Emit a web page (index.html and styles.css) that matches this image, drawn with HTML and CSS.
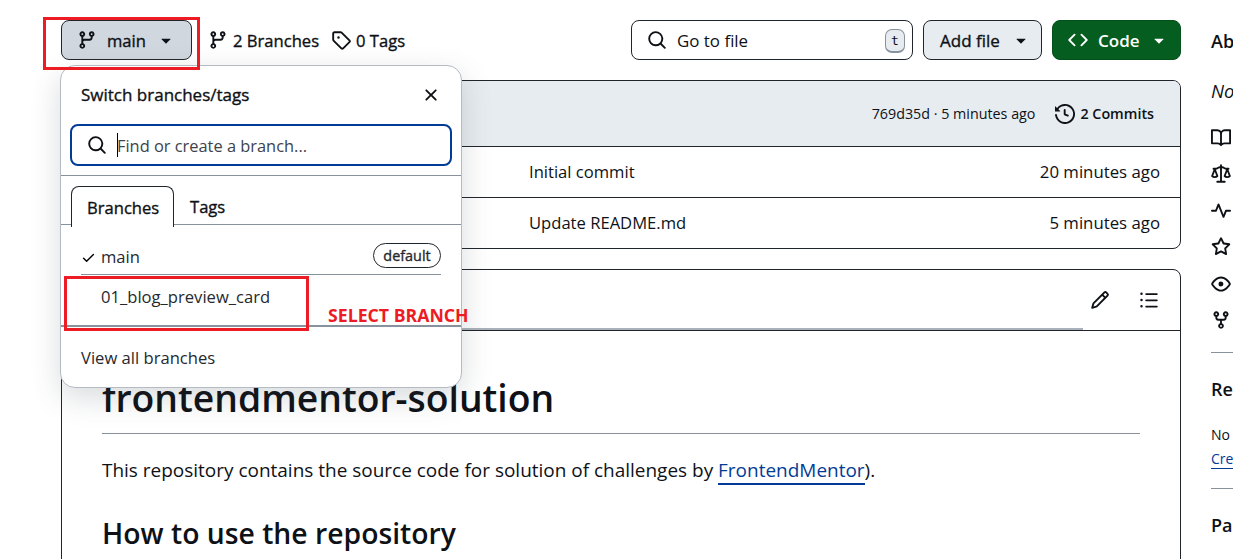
FILE: index.html
```html
<!DOCTYPE html>
<html lang="en">
<head>
<meta charset="utf-8">
<title>frontendmentor-solution</title>
<link rel="stylesheet" href="styles.css">
</head>
<body>
<svg class="sprite" width="0" height="0" aria-hidden="true">
  <symbol id="branch" viewBox="0 0 16 16"><path d="M9.5 3.25a2.25 2.25 0 1 1 3 2.122V6A2.5 2.5 0 0 1 10 8.5H6a1 1 0 0 0-1 1v1.128a2.251 2.251 0 1 1-1.5 0V5.372a2.25 2.25 0 1 1 1.5 0v1.836A2.493 2.493 0 0 1 6 7h4a1 1 0 0 0 1-1v-.628A2.25 2.25 0 0 1 9.5 3.25Zm-6 0a.75.75 0 1 0 1.5 0 .75.75 0 0 0-1.5 0Zm8.25-.75a.75.75 0 1 0 0 1.5.75.75 0 0 0 0-1.5ZM4.25 12a.75.75 0 1 0 0 1.5.75.75 0 0 0 0-1.5Z"/></symbol>
  <symbol id="tag" viewBox="0 0 16 16"><path d="M1 7.775V2.75C1 1.784 1.784 1 2.75 1h5.025c.464 0 .91.184 1.238.513l6.25 6.25a1.75 1.75 0 0 1 0 2.474l-5.026 5.026a1.75 1.75 0 0 1-2.474 0l-6.25-6.25A1.752 1.752 0 0 1 1 7.775Zm1.5 0c0 .066.026.13.073.177l6.25 6.25a.25.25 0 0 0 .354 0l5.025-5.025a.25.25 0 0 0 0-.354l-6.25-6.25a.25.25 0 0 0-.177-.073H2.75a.25.25 0 0 0-.25.25ZM6 5a1 1 0 1 1 0 2 1 1 0 0 1 0-2Z"/></symbol>
  <symbol id="search" viewBox="0 0 16 16"><path d="M10.68 11.74a6 6 0 0 1-7.922-8.982 6 6 0 0 1 8.982 7.922l3.04 3.04a.749.749 0 0 1-.326 1.275.749.749 0 0 1-.734-.215ZM11.5 7a4.499 4.499 0 1 0-8.997 0A4.499 4.499 0 0 0 11.5 7Z"/></symbol>
  <symbol id="code" viewBox="0 0 16 16"><path d="m11.28 3.22 4.25 4.25a.75.75 0 0 1 0 1.06l-4.25 4.25a.749.749 0 0 1-1.275-.326.749.749 0 0 1 .215-.734L13.94 8l-3.72-3.72a.749.749 0 0 1 .326-1.275.749.749 0 0 1 .734.215Zm-6.56 0a.751.751 0 0 1 1.042.018.751.751 0 0 1 .018 1.042L2.06 8l3.72 3.72a.749.749 0 0 1-.326 1.275.749.749 0 0 1-.734-.215L.47 8.53a.75.75 0 0 1 0-1.06Z"/></symbol>
  <symbol id="caret" viewBox="0 0 16 16"><path d="m4.427 7.427 3.396 3.396a.25.25 0 0 0 .354 0l3.396-3.396A.25.25 0 0 0 11.396 7H4.604a.25.25 0 0 0-.177.427Z"/></symbol>
  <symbol id="history" viewBox="0 0 16 16"><path d="m.427 1.927 1.215 1.215a8.002 8.002 0 1 1-1.6 5.685.75.75 0 1 1 1.493-.154 6.5 6.5 0 1 0 1.18-4.458l1.358 1.358A.25.25 0 0 1 3.896 6H.25A.25.25 0 0 1 0 5.75V2.104a.25.25 0 0 1 .427-.177ZM7.75 4a.75.75 0 0 1 .75.75v2.992l2.028.812a.75.75 0 0 1-.557 1.392l-2.5-1A.751.751 0 0 1 7 8.25v-3.5A.75.75 0 0 1 7.75 4Z"/></symbol>
  <symbol id="close" viewBox="0 0 16 16"><path d="M3.72 3.72a.75.75 0 0 1 1.06 0L8 6.94l3.22-3.22a.749.749 0 0 1 1.275.326.749.749 0 0 1-.215.734L9.06 8l3.22 3.22a.749.749 0 0 1-.326 1.275.749.749 0 0 1-.734-.215L8 9.06l-3.22 3.22a.751.751 0 0 1-1.042-.018.751.751 0 0 1-.018-1.042L6.94 8 3.72 4.78a.75.75 0 0 1 0-1.06Z"/></symbol>
  <symbol id="check" viewBox="0 0 16 16"><path d="M13.78 4.22a.75.75 0 0 1 0 1.06l-7.25 7.25a.75.75 0 0 1-1.06 0L2.22 9.28a.751.751 0 0 1 .018-1.042.751.751 0 0 1 1.042-.018L6 10.94l6.72-6.72a.75.75 0 0 1 1.06 0Z"/></symbol>
  <symbol id="pencil" viewBox="0 0 16 16"><path d="M11.013 1.427a1.75 1.75 0 0 1 2.474 0l1.086 1.086a1.75 1.75 0 0 1 0 2.474l-8.61 8.61c-.21.21-.47.364-.756.445l-3.251.93a.75.75 0 0 1-.927-.928l.929-3.25c.081-.286.235-.547.445-.758l8.61-8.61Zm.176 4.823L9.75 4.81l-6.286 6.287a.253.253 0 0 0-.064.108l-.558 1.953 1.953-.558a.253.253 0 0 0 .108-.064Zm1.238-3.763a.25.25 0 0 0-.354 0L10.811 3.75l1.439 1.44 1.263-1.263a.25.25 0 0 0 0-.354Z"/></symbol>
  <symbol id="list" viewBox="0 0 16 16"><path d="M5.75 2.5h8.5a.75.75 0 0 1 0 1.5h-8.5a.75.75 0 0 1 0-1.5Zm0 5h8.5a.75.75 0 0 1 0 1.5h-8.5a.75.75 0 0 1 0-1.5Zm0 5h8.5a.75.75 0 0 1 0 1.5h-8.5a.75.75 0 0 1 0-1.5ZM2 14a1 1 0 1 1 0-2 1 1 0 0 1 0 2Zm1-6a1 1 0 1 1-2 0 1 1 0 0 1 2 0ZM2 4a1 1 0 1 1 0-2 1 1 0 0 1 0 2Z"/></symbol>
  <symbol id="book" viewBox="0 0 16 16"><path d="M0 1.75A.75.75 0 0 1 .75 1h4.253c1.227 0 2.317.59 3 1.501A3.743 3.743 0 0 1 11.006 1h4.245a.75.75 0 0 1 .75.75v10.5a.75.75 0 0 1-.75.75h-4.507a2.25 2.25 0 0 0-1.591.659l-.622.621a.75.75 0 0 1-1.06 0l-.622-.621A2.25 2.25 0 0 0 5.258 13H.75a.75.75 0 0 1-.75-.75Zm7.251 10.324.004-5.073-.002-2.253A2.25 2.25 0 0 0 5.003 2.5H1.5v9h3.757a3.75 3.75 0 0 1 1.994.574ZM8.755 4.75l-.004 7.322a3.752 3.752 0 0 1 1.992-.572H14.5v-9h-3.495a2.25 2.25 0 0 0-2.25 2.25Z"/></symbol>
  <symbol id="law" viewBox="0 0 16 16"><path fill="none" stroke="currentColor" stroke-width="1.5" stroke-linecap="round" stroke-linejoin="round" d="M8 .9v13.3M5 14.2h6M2 3.8h1.7c.5 0 1-.1 1.4-.4l.7-.4c.4-.2.8-.4 1.200-.4h2c.4 0 .8.1 1.200.4l.7.4c.4.3.9.4 1.400.4H14M3 4.200.9 9.600c1.200 1.200 3.100 1.200 4.200 0ZM13 4.200l-2.100 5.400c1.100 1.200 3 1.200 4.200 0Z"/></symbol>
  <symbol id="pulse" viewBox="0 0 16 16"><path d="M6 2c.306 0 .582.187.696.471L10 10.731l1.304-3.26A.751.751 0 0 1 12 7h3.25a.75.75 0 0 1 0 1.5h-2.742l-1.812 4.528a.751.751 0 0 1-1.392 0L6 4.77 4.696 8.03A.75.75 0 0 1 4 8.5H.75a.75.75 0 0 1 0-1.5h2.742l1.812-4.529A.751.751 0 0 1 6 2Z"/></symbol>
  <symbol id="star" viewBox="0 0 16 16"><path d="M8 .25a.75.75 0 0 1 .673.418l1.882 3.815 4.21.612a.75.75 0 0 1 .416 1.279l-3.046 2.97.719 4.192a.751.751 0 0 1-1.088.791L8 12.347l-3.766 1.98a.75.75 0 0 1-1.088-.79l.72-4.194L.818 6.374a.75.75 0 0 1 .416-1.28l4.21-.611L7.327.668A.75.75 0 0 1 8 .25Zm0 2.445L6.615 5.5a.75.75 0 0 1-.564.41l-3.097.45 2.24 2.184a.75.75 0 0 1 .216.664l-.528 3.084 2.769-1.456a.75.75 0 0 1 .698 0l2.77 1.456-.53-3.084a.75.75 0 0 1 .216-.664l2.24-2.183-3.096-.45a.75.75 0 0 1-.564-.41L8 2.694Z"/></symbol>
  <symbol id="eye" viewBox="0 0 16 16"><path d="M8 2c1.981 0 3.671.992 4.933 2.078 1.27 1.091 2.187 2.345 2.637 3.023a1.62 1.62 0 0 1 0 1.798c-.45.678-1.367 1.932-2.637 3.023C11.67 13.008 9.981 14 8 14c-1.981 0-3.671-.992-4.933-2.078C1.797 10.83.88 9.576.43 8.898a1.62 1.62 0 0 1 0-1.798c.45-.677 1.367-1.931 2.637-3.022C4.33 2.992 6.019 2 8 2ZM1.679 7.932a.12.12 0 0 0 0 .136c.411.622 1.241 1.75 2.366 2.717C5.176 11.758 6.527 12.5 8 12.5c1.473 0 2.825-.742 3.955-1.715 1.124-.967 1.954-2.096 2.366-2.717a.12.12 0 0 0 0-.136c-.412-.621-1.242-1.75-2.366-2.717C10.824 4.242 9.473 3.5 8 3.5c-1.473 0-2.825.742-3.955 1.715-1.124.967-1.954 2.096-2.366 2.717ZM8 10a2 2 0 1 1-.001-3.999A2 2 0 0 1 8 10Z"/></symbol>
  <symbol id="fork" viewBox="0 0 16 16"><path d="M5 5.372v.878c0 .414.336.75.75.75h4.5a.75.75 0 0 0 .75-.75v-.878a2.25 2.25 0 1 1 1.5 0v.878a2.25 2.25 0 0 1-2.25 2.25h-1.5v2.128a2.251 2.251 0 1 1-1.5 0V8.5h-1.5A2.25 2.25 0 0 1 3.5 6.25v-.878a2.25 2.25 0 1 1 1.5 0ZM5 3.25a.75.75 0 1 0-1.5 0 .75.75 0 0 0 1.5 0Zm6.75.75a.75.75 0 1 0 0-1.5.75.75 0 0 0 0 1.5Zm-3 8.75a.75.75 0 1 0-1.5 0 .75.75 0 0 0 1.5 0Z"/></symbol>
</svg>

<div class="page">
  <main class="main">
    <div class="toolbar">
      <button class="btn btn-branch"><svg class="icon"><use href="#branch"/></svg><span class="t-main">main</span><svg class="icon"><use href="#caret"/></svg></button>
      <a class="stat stat-branches"><svg class="icon"><use href="#branch"/></svg><span class="t-branches">2 Branches</span></a>
      <a class="stat stat-tags"><svg class="icon"><use href="#tag"/></svg><span class="t-tags">0 Tags</span></a>
      <div class="goto"><svg class="icon"><use href="#search"/></svg><span class="t-goto">Go to file</span><kbd class="kbd">t</kbd></div>
      <button class="btn btn-add"><span class="t-add">Add file</span><svg class="icon"><use href="#caret"/></svg></button>
      <button class="btn btn-code"><svg class="icon"><use href="#code"/></svg><span class="t-code">Code</span><svg class="icon"><use href="#caret"/></svg></button>
    </div>

    <section class="files">
      <div class="files-head">
        <span class="t-hash">769d35d · 5 minutes ago</span>
        <svg class="icon"><use href="#history"/></svg>
        <span class="t-commits">2 Commits</span>
      </div>
      <div class="file-row"><span class="t-initial">Initial commit</span><span class="t-20">20 minutes ago</span></div>
      <div class="file-row"><span class="t-update">Update README.md</span><span class="t-5">5 minutes ago</span></div>
    </section>

    <section class="readme">
      <div class="readme-head">
        <div class="readme-tabs"></div>
        <svg class="icon icon-pencil"><use href="#pencil"/></svg>
        <svg class="icon"><use href="#list"/></svg>
      </div>
      <article class="article">
        <h1 class="title"><span class="t-title">frontendmentor-solution</span></h1>
        <p class="intro">This repository contains the source code for solution of challenges by <a class="link">FrontendMentor</a>).</p>
        <h2 class="subtitle">How to use the repository</h2>
      </article>
    </section>
  </main>

  <aside class="side">
    <h2 class="side-title side-about">About</h2>
    <p class="side-desc">No description</p>
    <div class="side-icons">
      <svg class="icon"><use href="#book"/></svg>
      <svg class="icon"><use href="#law"/></svg>
      <svg class="icon"><use href="#pulse"/></svg>
      <svg class="icon"><use href="#star"/></svg>
      <svg class="icon"><use href="#eye"/></svg>
      <svg class="icon"><use href="#fork"/></svg>
    </div>
    <div class="side-block side-releases">
      <h2 class="side-title">Releases</h2>
      <p class="side-note">No releases</p>
      <a class="side-link">Create</a>
    </div>
    <div class="side-block side-packages">
      <h2 class="side-title">Packages</h2>
    </div>
  </aside>

  <div class="menu">
    <div class="menu-head"><span class="t-switch">Switch branches/tags</span><svg class="icon"><use href="#close"/></svg></div>
    <div class="menu-search"><svg class="icon"><use href="#search"/></svg><span class="caret-bar"></span><span class="t-find">Find or create a branch...</span></div>
    <div class="menu-tabs"><span class="tab tab-on"><span class="t-tab1">Branches</span></span><span class="tab"><span class="t-tab2">Tags</span></span></div>
    <div class="menu-item item-main"><svg class="check"><use href="#check"/></svg><span class="t-imain">main</span><span class="pill"><span class="t-default">default</span></span></div>
    <div class="menu-item item-blog"><span class="t-blog">01_blog_preview_card</span></div>
    <div class="menu-foot"><span class="t-view">View all branches</span></div>
  </div>

  <div class="mark mark-button"></div>
  <div class="mark mark-item"></div>
  <div class="mark-text">SELECT BRANCH</div>
</div>
</body>
</html>
```

FILE: styles.css
```css
* { box-sizing: border-box; }
body {
  margin: 0;
  width: 1233px;
  height: 559px;
  overflow: hidden;
  background: #fff;
  color: #0e1116;
  font-family: "Open Sans", "Noto Sans", sans-serif;
  font-size: 16.6px;
  line-height: 24px;
}
h1, h2, p { margin: 0; }
.sprite { display: block; }
.icon { width: 20px; height: 20px; flex: none; fill: currentColor; }
span, a, h1, h2, p { white-space: nowrap; }

/* Medium weight for labels */
.t-main, .t-branches, .t-tags, .t-add, .t-switch, .t-tab1, .t-tab2, .t-default { -webkit-text-stroke: .35px currentColor; }

.page {
  position: relative;
  display: flex;
  width: 1233px;
  height: 559px;
  padding: 20px 0 0 61px;
  overflow: hidden;
}
.main { width: 1120px; flex: none; display: flex; flex-direction: column; }

/* Toolbar */
.toolbar { display: flex; align-items: center; height: 40px; flex: none; }
.toolbar span { padding-top: 2px; }
.btn {
  display: flex;
  align-items: center;
  height: 40px;
  padding: 0;
  border: 1px solid #20252c;
  border-radius: 8px;
  background: #e7ecf0;
  color: #0e1116;
  font: inherit;
}
.btn-branch { width: 131px; padding-left: 15px; background: #d0d7de; justify-content: flex-start; }
.btn-branch .t-main { width: 40px; margin: 0 9px 0 10px; text-align: left; }
.stat { display: flex; align-items: center; }
.stat-branches { margin-left: 16px; width: 123px; gap: 5px; }
.stat-tags { gap: 5px; }
.goto {
  display: flex;
  align-items: center;
  width: 282px;
  height: 40px;
  margin-left: auto;
  padding: 0 7px 0 15px;
  border: 1px solid #20252c;
  border-radius: 8px;
}
.t-goto { margin-left: 10px; font-size: 16.9px; }
.kbd {
  width: 20px;
  height: 24px;
  margin: 2px 0 0 auto;
  border: 1px solid #88929d;
  border-bottom-width: 2px;
  border-radius: 7px;
  background: #e7ecf0;
  font: 13px/22px "DejaVu Sans Mono", monospace;
  text-align: center;
}
.btn-add { width: 119px; margin-left: 10px; padding-left: 16px; }
.t-add { width: 71px; text-align: left; font-size: 17px; }
.btn-code { width: 129px; margin-left: 10px; padding-left: 15px; background: #055d20; border-color: #04511c; color: #fff; font-weight: 600; }
.t-code { width: 51px; margin-left: 10px; text-align: left; font-size: 17px; }

/* File list */
.files { height: 169px; flex: none; margin-top: 20px; border: 1px solid #20252c; border-radius: 8px; overflow: hidden; }
.files-head { display: flex; align-items: center; height: 65px; padding-right: 26px; background: #e7ecf0; font-size: 14.3px; }
.t-hash { margin-left: auto; margin-right: 20px; }
.files-head .t-commits { margin-left: 5px; font-weight: 600; }
.file-row { display: flex; align-items: center; justify-content: space-between; height: 51px; padding: 0 20px 0 467px; border-top: 1px solid #20252c; }
.t-20, .t-5 { font-size: 16.8px; }

/* Readme */
.readme { height: 400px; flex: none; margin-top: 20px; border: 1px solid #20252c; border-radius: 8px; }
.readme-head { display: flex; align-items: center; height: 61px; padding-right: 21px; border-bottom: 1px solid #20252c; }
.readme-tabs { width: 1021px; height: 60px; border-bottom: 2px solid #aab1ba; }
.icon-pencil { margin-left: 7px; margin-right: 29px; }
.readme-head .icon { flex: none; }
.article { padding: 42px 40px 0; }
.title { height: 61px; border-bottom: 1px solid #88929d; font-size: 37.3px; line-height: 50px; font-weight: 600; }
.intro { margin-top: 21px; font-size: 18.98px; line-height: 30px; }
.link { color: #023b95; border-bottom: 2px solid #023b95; }
.subtitle { margin-top: 28px; font-size: 28.3px; line-height: 40px; font-weight: 600; }

/* Sidebar */
.side { display: flex; flex-direction: column; align-items: flex-start; width: 200px; flex: none; margin-left: 30px; }
.side-title { font-size: 18px; line-height: 24px; font-weight: 600; }
.side-about { margin-top: 9px; }
.side-desc { margin-top: 26px; font-size: 18.5px; line-height: 24px; font-style: italic; }
.side-icons { display: flex; flex-direction: column; gap: 16.4px; margin-top: 25px; }
.side-block { width: 200px; border-top: 1px solid #88929d; }
.side-releases { height: 136px; margin-top: 22px; padding-top: 24px; }
.side-note { margin-top: 23px; font-size: 14px; line-height: 22px; }
.side-link { display: inline-block; font-size: 14px; line-height: 19px; margin-top: 1px; color: #023b95; border-bottom: 1px solid #023b95; }
.side-packages { padding-top: 24px; }

/* Branch menu, floating over the page */
.menu {
  position: absolute;
  left: 60px;
  top: 65px;
  width: 402px;
  height: 323px;
  border: 1px solid #b4bbc5;
  border-radius: 15px;
  background: #fff;
  box-shadow: 0 10px 30px rgba(66, 74, 83, .2);
}
.menu-head { display: flex; align-items: center; justify-content: space-between; height: 58px; padding: 0 20px; }
.t-switch { font-size: 17px; }
.menu-search { display: flex; align-items: center; height: 42px; margin: 0 9px; padding-left: 15px; border: 2px solid #023b95; border-radius: 8px; color: #3c434b; }
.menu-search .icon { color: #0e1116; }
.t-find { padding-top: 2px; margin-left: -1px; font-size: 16.4px; }
.caret-bar { width: 1px; height: 24px; margin-left: 10px; background: #000; }
.menu-tabs { display: flex; height: 50px; margin-top: 9px; padding: 10px 10px 0; border-top: 1px solid #88929d; border-bottom: 1px solid #88929d; }
.tab { display: flex; align-items: center; height: 41px; padding: 1px 16px 0; }
.tab-on { width: 103px; padding: 1px 15px 0; border: 1px solid #20252c; border-bottom: 0; border-radius: 8px 8px 0 0; background: #fff; }
.menu-item { display: flex; align-items: center; margin: 0 20px; color: #25292e; }
.item-main { height: 50px; padding-top: 15px; border-bottom: 1px solid #88929d; }
.check { width: 15px; height: 15px; margin: 1px 5px 0 0; }
.pill { display: flex; align-items: center; justify-content: center; width: 68px; height: 25px; margin: -4px 0 0 auto; padding-top: 1px; border: 1px solid #20252c; border-radius: 13px; font-size: 14.4px; }
.item-blog { height: 50px; padding: 0 0 7px 20px; }
.menu-foot { display: flex; align-items: center; height: 64px; padding-left: 20px; border-top: 2px solid #88929d; color: #25292e; }

/* Annotations */
.mark { position: absolute; border: 3px solid #ed1c24; }
.mark-button { left: 43px; top: 17px; width: 157px; height: 53px; }
.mark-item { left: 64px; top: 276px; width: 245px; height: 55px; }
.mark-text { position: absolute; left: 328px; top: 303px; color: #ed1c24; font-size: 17.7px; font-weight: 700; white-space: nowrap; }
```
